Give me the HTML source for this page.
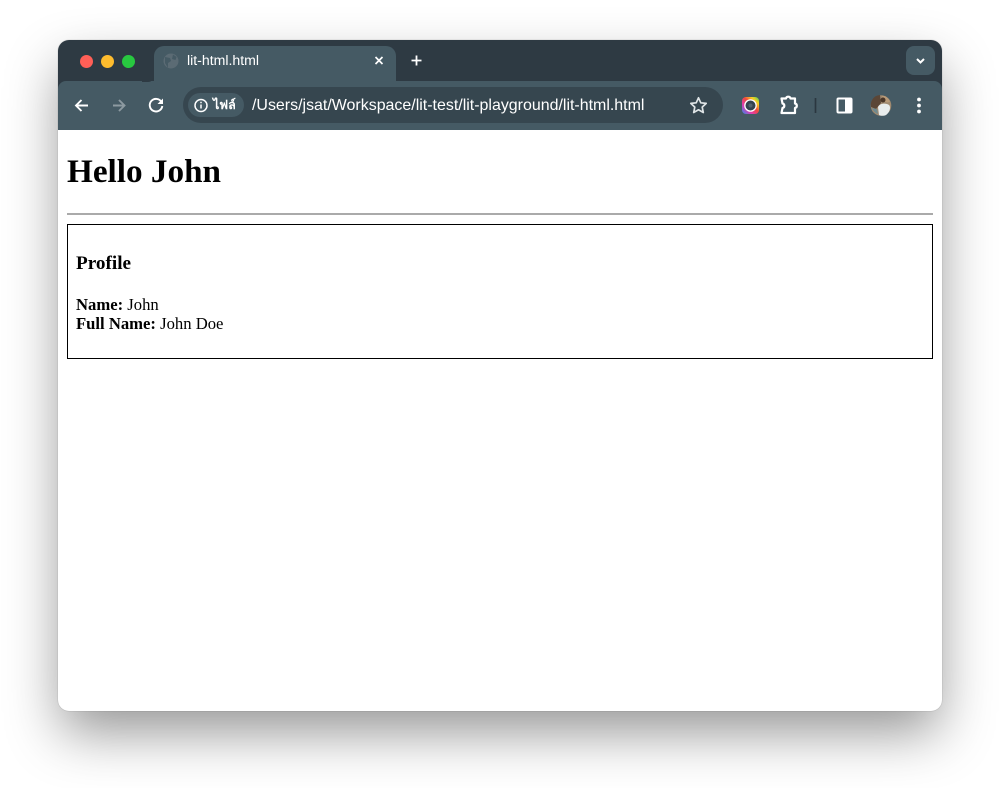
<!DOCTYPE html>
<html><head><meta charset="utf-8"><style>
html,body{margin:0;padding:0;background:#fff;width:1000px;height:788px;overflow:hidden}
.win{position:absolute;left:58px;top:40px;width:884px;height:671px;border-radius:11px;background:#fff;box-shadow:0 24px 54px -3px rgba(0,0,0,.42),0 0 1px rgba(0,0,0,.35)}
.top{position:absolute;left:0;top:0;width:884px;height:90px;border-radius:11px 11px 0 0;background:#2e3a43;overflow:hidden}
.bar{position:absolute;left:0;top:41px;width:884px;height:49px;background:#455a64;border-radius:8px 8px 0 0}
.tab{position:absolute;left:96px;top:6px;width:242px;height:36px;background:#455a64;border-radius:10px 10px 0 0}
.dot{position:absolute;width:13px;height:13px;border-radius:50%;top:14.500px}
.t{position:absolute;font-family:"Liberation Sans",sans-serif;color:#fff;white-space:nowrap}
.omni{position:absolute;left:125px;top:47px;width:540px;height:36px;background:#36464f;border-radius:18px}
.chip{position:absolute;left:130px;top:53px;width:56px;height:24px;background:#455a64;border-radius:12px}
svg{position:absolute;left:0;top:0}
.page{position:absolute;left:0;top:90px;width:884px;font-family:"Liberation Serif",serif;color:#000}
h1{position:absolute;left:9px;top:23px;margin:0;font-size:33.200px;line-height:37px;font-weight:bold;white-space:nowrap}
.hr{position:absolute;left:9px;top:83px;width:866px;height:2px;background:#aaa}
.box{position:absolute;left:9px;top:94px;width:864px;height:133px;border:1px solid #000}
h3{position:absolute;left:8px;top:28px;margin:0;font-size:19.200px;line-height:22px;font-weight:bold}
.p{position:absolute;left:8px;top:69.500px;font-size:16.650px;line-height:19px;white-space:nowrap}
</style></head><body>
<div class="win">
<div class="top">
  <div class="bar"></div>
  <div class="tab"></div>
  <div class="omni"></div>
  <div class="chip"></div>
  <div class="dot" style="left:21.500px;top:14.500px;background:#ff5f57"></div>
  <div class="dot" style="left:42.500px;top:14.500px;background:#febc2e"></div>
  <div class="dot" style="left:63.500px;top:14.500px;background:#28c840"></div>
  <div class="t" style="left:129px;top:12px;font-size:14.100px;line-height:16px">lit-html.html</div>
  <div class="t" style="left:155px;top:56px;font-size:12.500px;font-weight:bold;line-height:18px;font-family:'Liberation Sans','Noto Sans CJK SC',sans-serif">ไฟล์</div>
  <div class="t" style="left:194px;top:57px;font-size:15.960px;line-height:18px">/Users/jsat/Workspace/lit-test/lit-playground/lit-html.html</div>
  <svg width="884" height="90" viewBox="0 0 884 90" fill="none">
    <path d="M96 36a6 6 0 0 1-6 6H84v-1h6a6 6 0 0 0 6-6z" fill="#2e3a43"/>
    <!-- globe -->
    <circle cx="113" cy="21" r="7.500" fill="#5b6b74"/>
    <path d="M107 17l5 1 1 3-3 2 0 5-3-5zM115 14.500l3.500 2.500-1 3-3.500-1z" fill="#455a64"/>
    <!-- close tab -->
    <path d="M317.500 17l7 7M324.500 17l-7 7" stroke="#fff" stroke-width="1.700"/>
    <!-- new tab -->
    <path d="M358.500 15.500v10M353.500 20.500h10" stroke="#fff" stroke-width="1.800"/>
    <!-- dropdown -->
    <rect x="848" y="6" width="29" height="29" rx="8" fill="#455a64"/>
    <path d="M859 19l3.500 3.500 3.500-3.500" stroke="#fff" stroke-width="2"/>
    <!-- back -->
    <path d="M30 65.500H18.500M23.500 60l-5.500 5.500 5.500 5.500" stroke="#fff" stroke-width="1.900"/>
    <!-- forward -->
    <path d="M55 65.500h11.500M61 60l5.500 5.500-5.500 5.500" stroke="#8d9aa1" stroke-width="1.900"/>
    <!-- reload -->
    <path d="M103.500 62a6.300 6.300 0 1 0 .8 4" stroke="#fff" stroke-width="1.900"/>
    <path d="M105 58.500v5.500h-5.500z" fill="#fff"/>
    <!-- info -->
    <circle cx="143" cy="65.500" r="6" stroke="#fff" stroke-width="1.500"/>
    <path d="M143 64.500v4M143 61.800v1.400" stroke="#fff" stroke-width="1.500"/>
    <!-- star -->
    <path d="M640.500 57.800l2.300 5 5.400.6-4 3.700 1.100 5.400-4.800-2.700-4.800 2.700 1.100-5.400-4-3.700 5.400-.6z" stroke="#dfe4e6" stroke-width="1.700" stroke-linejoin="round"/>
    <!-- colour icon -->
    <defs><linearGradient id="g" x1="0" y1="1" x2="1" y2="0"><stop offset="0" stop-color="#2a8cf0"/><stop offset=".3" stop-color="#e23bb0"/><stop offset=".55" stop-color="#f0483e"/><stop offset=".78" stop-color="#f8d020"/><stop offset="1" stop-color="#40d060"/></linearGradient></defs>
    <rect x="684" y="57" width="17" height="17" rx="4" fill="url(#g)"/>
    <circle cx="692.500" cy="65.500" r="6.300" fill="#fff"/>
    <circle cx="692.500" cy="65.500" r="5" fill="#33434f"/>
    <circle cx="692.500" cy="65.500" r="2" fill="#52646f"/>
    <!-- puzzle -->
    <path d="M723.500 58.500h4.500a2.300 2.300 0 0 1 4.500 0h4.500v5a2.300 2.300 0 0 1 0 4.500v5h-13.500l1-5a2.300 2.300 0 0 0 0-4.500z" stroke="#fff" stroke-width="2.200" stroke-linejoin="round"/>
    <!-- divider -->
    <path d="M757.500 58v15" stroke="#2b3740" stroke-width="1.700"/>
    <!-- side panel -->
    <rect x="778.500" y="57.500" width="16" height="16" rx="2" fill="#fff"/>
    <rect x="780.500" y="59.500" width="6.500" height="12" fill="#455a64"/>
    <!-- avatar -->
    <circle cx="823" cy="65.500" r="10.300" fill="#a08a70"/>
    <path d="M814 60a10 10 0 0 1 8-5l1 8-5 6-5-2a10 10 0 0 1 1-7z" fill="#5b4636"/>
    <path d="M824 55.500a10 10 0 0 1 8 6l-2 1-5-1z" fill="#b89a78"/>
    <path d="M820 67c2-4 8-4 11-2 2 2 1 7-3 10-2 1-5 1-7 0z" fill="#e8ecec"/>
    <path d="M814 68l5 1 1 5a10 10 0 0 1-6-6z" fill="#6f8a90"/>
    <circle cx="825" cy="60" r="2.500" fill="#4a3628"/>
    <!-- menu -->
    <circle cx="861" cy="59.500" r="1.900" fill="#fff"/>
    <circle cx="861" cy="65.500" r="1.900" fill="#fff"/>
    <circle cx="861" cy="71.500" r="1.900" fill="#fff"/>
  </svg>
</div>
<div class="page">
  <h1>Hello John</h1>
  <div class="hr"></div>
  <div class="box">
    <h3>Profile</h3>
    <div class="p"><b>Name:</b> John<br><b>Full Name:</b> John Doe</div>
  </div>
</div>
</div>
</body></html>
